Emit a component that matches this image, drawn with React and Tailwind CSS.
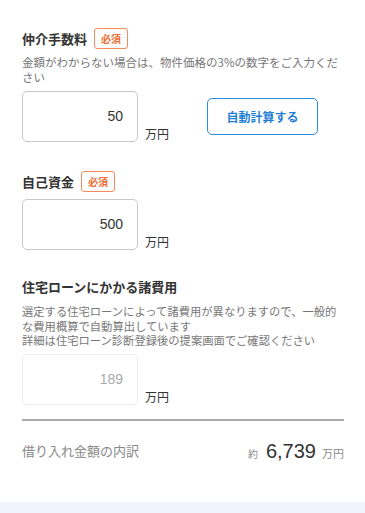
import React from "react";

const jp = "font-['Noto_Sans_CJK_JP','Noto_Sans',sans-serif]";

function Badge() {
    return (
        <span className="ml-[7px] flex h-[21px] w-[34px] items-center justify-center rounded-[3px] border border-[#f58a5c] text-[10px] font-bold leading-none text-[#ef6a2f]">
            必須
        </span>
    );
}

function AmountInput({ value, disabled }) {
    return (
        <div className="flex items-end gap-[7px]">
            <div
                className={
                    disabled
                        ? "flex h-[51px] w-[116px] items-center justify-end rounded-[5px] border border-[#ececec] bg-white pr-[14px] text-[14px] text-[#aaa]"
                        : "flex h-[51px] w-[116px] items-center justify-end rounded-[5px] border border-[#c9c9c9] bg-white pr-[14px] text-[14px] text-[#333]"
                }
            >
                <span className="font-['Liberation_Sans',sans-serif]">{value}</span>
            </div>
            <span className="text-[12px] leading-[17px] text-[#333]">万円</span>
        </div>
    );
}

function App() {
    return (
        <div className={`${jp} min-h-[513px] bg-white`}>
            <div className="px-[21px] pl-[22px] pt-[28px]">
                {/* 仲介手数料 */}
                <div className="flex h-[21px] items-center">
                    <h2 className="text-[13px] font-bold text-[#333]">仲介手数料</h2>
                    <Badge />
                </div>
                <p className="mt-[6px] whitespace-nowrap text-[11.5px] leading-[14.5px] text-[#777]">
                    金額がわからない場合は、物件価格の3%の数字をご入力くだ
                    <br />
                    さい
                </p>
                <div className="mt-[7px] flex items-center">
                    <AmountInput value="50" />
                    <button className="ml-[38px] flex h-[37px] w-[111px] items-center justify-center rounded-[5px] border border-[#2b8de0] text-[12px] font-bold text-[#1f7fd6]">
                        自動計算する
                    </button>
                </div>

                {/* 自己資金 */}
                <div className="mt-[29px] flex h-[21px] items-center">
                    <h2 className="text-[13px] font-bold text-[#333]">自己資金</h2>
                    <Badge />
                </div>
                <div className="mt-[7px]">
                    <AmountInput value="500" />
                </div>

                {/* 諸費用 */}
                <div className="mt-[27px] flex h-[20px] items-center">
                    <h2 className="text-[13px] font-bold text-[#333]">住宅ローンにかかる諸費用</h2>
                </div>
                <p className="mt-[7px] whitespace-nowrap text-[11.3px] leading-[14.5px] text-[#777]">
                    選定する住宅ローンによって諸費用が異なりますので、一般的
                    <br />
                    な費用概算で自動算出しています
                    <br />
                    詳細は住宅ローン診断登録後の提案画面でご確認ください
                </p>
                <div className="mt-[6px]">
                    <AmountInput value="189" disabled />
                </div>

                <div className="mt-[14px] h-[2px] bg-[#a9a9a9]" />

                <div className="mt-[15px] flex h-[30px] items-center justify-between">
                    <span className="text-[13px] text-[#888]">借り入れ金額の内訳</span>
                    <div className="flex items-baseline">
                        <span className="text-[10px] text-[#888]">約</span>
                        <span className="ml-[8px] font-['Liberation_Sans',sans-serif] text-[20px] text-[#333]">6,739</span>
                        <span className="ml-[6px] text-[11px] text-[#888]">万円</span>
                    </div>
                </div>
            </div>
            <div className="mt-[36px] h-[13px] bg-[#eef5fd]" />
        </div>
    );
}

export default App;
